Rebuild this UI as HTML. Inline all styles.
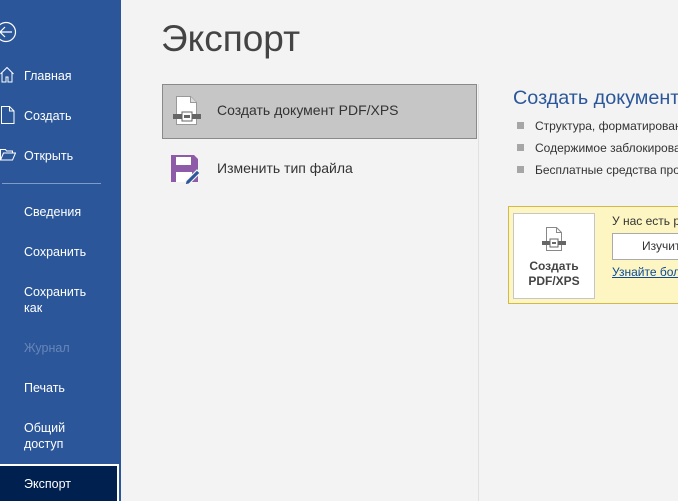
<!DOCTYPE html>
<html><head><meta charset="utf-8"><style>
*{margin:0;padding:0;box-sizing:border-box}
html,body{width:678px;height:501px;overflow:hidden}
body{background:#f3f3f3;font-family:"Segoe UI","Liberation Sans",sans-serif;position:relative}
#wrap{position:absolute;left:0;top:0;width:678px;height:501px;overflow:hidden}
.side{position:absolute;left:0;top:0;width:121px;height:501px;background:#2b579a}
.side .it{position:absolute;left:24px;color:#fff;font-size:12.5px;line-height:16px}
.side svg{position:absolute}
.sep{position:absolute;left:2px;top:183px;width:99px;height:1px;background:#7f9bc9}
.exp{position:absolute;left:0;top:464px;width:119px;height:40px;background:#002050;border:2px solid #fff;border-left:none}
h1{position:absolute;left:161px;top:18px;font-weight:normal;font-size:37px;color:#444;font-family:"Segoe UI Light","Liberation Sans",sans-serif}
.opt1{position:absolute;left:162px;top:84px;width:315px;height:55px;background:#c6c6c6;border:1px solid #8a8a8a}
.t{position:absolute;font-size:14px;color:#333;white-space:nowrap}
.vline{position:absolute;left:478px;top:84px;width:1px;height:417px;background:#e1e1e1}
.rh{position:absolute;left:513px;top:87px;font-size:19.8px;color:#2b579a;white-space:nowrap}
.b{position:absolute;left:535px;font-size:12px;color:#333;white-space:nowrap}
.sq{position:absolute;left:517px;width:7px;height:7px;background:#a6a6a6}
.yb{position:absolute;left:508px;top:206px;width:180px;height:98px;background:#fdf6c3;border:1px solid #d5b84a}
.wb{position:absolute;left:513px;top:213px;width:82px;height:86px;background:#fff;border:1px solid #c6c6c6}
.btn{position:absolute;left:612px;top:233px;width:80px;height:27px;background:#fff;border:1px solid #aaa;font-size:12px;color:#333;padding:5px 0 0 29px;white-space:nowrap}
</style></head><body><div id="wrap">
<div class="side">
<svg style="left:-4px;top:20px" width="24" height="24" viewBox="0 0 24 24"><circle cx="10" cy="12" r="9.5" fill="none" stroke="#fff" stroke-width="1.2"/><path d="M4 12h12M9 7l-5 5 5 5" fill="none" stroke="#fff" stroke-width="1.2"/></svg>
<svg style="left:0;top:66px" width="16" height="17" viewBox="0 0 16 17"><path d="M0.5 8L7 1.5 13.5 8M2 6.5V16h4v-5h2v5h4V6.5" fill="none" stroke="#fff" stroke-width="1"/></svg>
<div class="it" style="top:68px">Главная</div>
<svg style="left:1px;top:106px" width="14" height="18" viewBox="0 0 14 18"><path d="M0.5 0.5h8l4.5 4.5v12.5H0.5zM8.5 0.5V5H13" fill="none" stroke="#fff" stroke-width="1"/></svg>
<div class="it" style="top:108px">Создать</div>
<svg style="left:0;top:148px" width="16" height="13" viewBox="0 0 16 13"><path d="M0.5 12V1.5h5l1 1.5h6V5M0.5 12l3-7h12l-3 7z" fill="none" stroke="#fff" stroke-width="1"/></svg>
<div class="it" style="top:148px">Открыть</div>
<div class="sep"></div>
<div class="it" style="top:204px">Сведения</div>
<div class="it" style="top:244px">Сохранить</div>
<div class="it" style="top:284px">Сохранить<br>как</div>
<div class="it" style="top:340px;color:#6985b8">Журнал</div>
<div class="it" style="top:380px">Печать</div>
<div class="it" style="top:420px">Общий<br>доступ</div>
<div class="exp"></div>
<div class="it" style="top:476px">Экспорт</div>
</div>
<h1>Экспорт</h1>
<div class="opt1"></div>
<svg style="position:absolute;left:172px;top:95px" width="30" height="32" viewBox="0 0 30 32"><path d="M4.5 1.5h14l6 6v22h-20z" fill="#fff" stroke="#999"/><path d="M18.5 1.5v6h6" fill="#ddd" stroke="#999"/><rect x="1" y="19" width="28" height="5" fill="#666"/><rect x="10" y="17" width="10" height="9" fill="#fff" stroke="#666"/><rect x="12" y="20" width="6" height="3" fill="#666"/></svg>
<div class="t" style="left:217px;top:102px">Создать документ PDF/XPS</div>
<svg style="position:absolute;left:171px;top:155px" width="30" height="30" viewBox="0 0 30 30"><path d="M0 0h23l4 4v23H0z" fill="#8e5ba8"/><rect x="5" y="2" width="15" height="8" fill="#fff"/><rect x="5" y="17" width="16" height="10" fill="#fff"/><path d="M15 26l11-11 3 3-11 11-4 1z" fill="#2b579a" stroke="#f3f3f3" stroke-width="1.2"/></svg>
<div class="t" style="left:217px;top:160px">Изменить тип файла</div>
<div class="vline"></div>
<div class="rh">Создать документ PDF/XPS</div>
<div class="sq" style="top:122px"></div><div class="b" style="top:119px">Структура, форматирование и содержимое</div>
<div class="sq" style="top:144px"></div><div class="b" style="top:141px">Содержимое заблокировано от изменений</div>
<div class="sq" style="top:166px"></div><div class="b" style="top:163px">Бесплатные средства просмотра</div>
<div class="yb"></div>
<div class="wb"></div>
<svg style="position:absolute;left:541px;top:226px" width="26" height="26" viewBox="0 0 26 26"><path d="M5.5 1.5h10l5 5v18h-15z" fill="#fff" stroke="#888"/><path d="M15.5 1.5v5h5" fill="none" stroke="#888"/><rect x="1" y="15" width="24" height="4" fill="#666"/><rect x="9" y="13" width="8" height="8" fill="#fff" stroke="#666"/><rect x="11" y="16" width="4" height="2" fill="#666"/></svg>
<div style="position:absolute;left:513px;top:259px;width:82px;text-align:center;font-size:12px;font-weight:bold;color:#444;line-height:15px">Создать<br>PDF/XPS</div>
<div class="b" style="left:612px;top:214px">У нас есть рекомендации</div>
<div class="btn">Изучить</div>
<div class="b" style="left:612px;top:265px;color:#0b4a9c;text-decoration:underline">Узнайте больше</div>
</div></body></html>
